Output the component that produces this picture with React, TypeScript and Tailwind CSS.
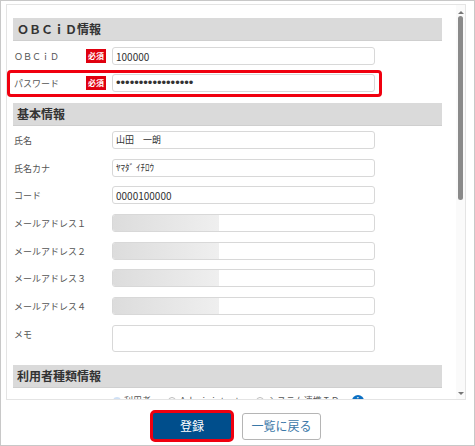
const Required = () => (
  <span className="flex h-[14px] w-[20px] shrink-0 items-center justify-center bg-[#e0000f] text-[8px] font-bold leading-none text-white">必須</span>
);

const Heading = ({ title, className }: { title: string; className: string }) => (
  <div className={`flex h-[23px] w-[429px] items-center border-b border-[#cfcfcf] bg-[#dadada] pl-[4px] text-[12px] font-bold text-[#333] ${className}`}>
    {title}
  </div>
);

type RowProps = {
  label: string;
  value?: string;
  required?: boolean;
  masked?: boolean;
  inputClass?: string;
  className: string;
};

const Row = ({ label, value, required, masked, inputClass = "text-[9px]", className }: RowProps) => (
  <div className={`flex h-[18px] items-center ${className}`}>
    <div className="w-[73px] shrink-0 whitespace-nowrap pl-[1px] pt-[2px] text-[9px] text-[#555]">{label}</div>
    <div className="w-[26px] shrink-0">{required && <Required />}</div>
    <div className={`flex h-[18px] w-[263px] items-center overflow-hidden rounded-[3px] border border-[#d8d8d8] bg-white pl-[3px] text-[#333] ${inputClass}`}>
      {masked && <div className="-ml-[4px] h-[18px] w-[107px] shrink-0 bg-gradient-to-r from-[#dcdcdc] to-[#efefef]" />}
      {value}
    </div>
  </div>
);

const App = () => {
  return (
    <div className="relative h-[446px] w-[475px] overflow-hidden border border-[#c8c8c8] bg-white font-['Noto_Sans_CJK_JP','Noto_Sans',sans-serif]">
      <div className="relative ml-[5px] mt-[3px] h-[396px] w-[460px] overflow-hidden border border-[#e4e4e4] bg-white pl-[6px] pt-[13px]">
        <Heading title="ＯＢＣｉＤ情報" className="" />
        <Row label="ＯＢＣｉＤ" value="100000" required inputClass="text-[10px]" className="mt-[6px]" />
        <Row label="パスワード" value="•••••••••••••••••" required inputClass="font-['Liberation_Sans'] text-[13px]" className="mt-[9px]" />
        <Heading title="基本情報" className="mt-[11px]" />
        <Row label="氏名" value="山田　一朗" className="mt-[5px]" />
        <Row label="氏名カナ" value="ﾔﾏﾀﾞ ｲﾁﾛｳ" className="mt-[10px]" />
        <Row label="コード" value="0000100000" inputClass="text-[10px]" className="mt-[9px]" />
        <Row label="メールアドレス１" masked className="mt-[10px]" />
        <Row label="メールアドレス２" masked className="mt-[10px]" />
        <Row label="メールアドレス３" masked className="mt-[9px]" />
        <Row label="メールアドレス４" masked className="mt-[10px]" />
        <div className="mt-[10px] flex h-[27px]">
          <div className="w-[99px] pl-[1px] pt-[1px] text-[9px] leading-[18px] text-[#555]">メモ</div>
          <div className="w-[263px] rounded-[3px] border border-[#d8d8d8]" />
        </div>
        <Heading title="利用者種類情報" className="mt-[13px]" />
        <div className="mt-[7px] flex items-center pl-[100px] text-[9px] leading-[12px] text-[#555]">
          <span className="mr-[3px] h-[8px] w-[8px] rounded-full border-[2px] border-[#cfe0f5] bg-[#2f80d8]" />
          <span>利用者</span>
          <span className="ml-[17px] mr-[4px] h-[8px] w-[8px] rounded-full border border-[#bbb]" />
          <span className="w-[76px] tracking-[1px]">Administrator</span>
          <span className="mr-[4px] h-[8px] w-[8px] rounded-full border border-[#bbb]" />
          <span className="whitespace-nowrap">システム連携ＩＤ</span>
          <span className="ml-[12px] flex h-[12px] w-[12px] items-center justify-center rounded-full bg-[#0b6fc2] text-[8px] font-bold text-white">i</span>
        </div>
        <div className="absolute bottom-0 right-0 top-0 flex w-[9px] flex-col items-center bg-[#fafafa] pt-[6px]">
          <div className="h-0 w-0 border-x-[3px] border-b-[3px] border-x-transparent border-b-[#777]" />
          <div className="mt-[2px] h-[184px] w-[5px] rounded-[3px] bg-[#8a8a8a]" />
          <div className="mb-[4px] mt-auto h-0 w-0 border-x-[3px] border-t-[3px] border-x-transparent border-t-[#777]" />
        </div>
      </div>

      <div className="mt-[10px] flex items-center pl-[149px]">
        <button className="flex h-[32px] w-[84px] items-center justify-center rounded-[5px] border-[3px] border-[#f0000f] bg-[#004e8c] text-[12px] text-white">登録</button>
        <button className="ml-[8px] flex h-[27px] w-[79px] items-center justify-center rounded-[3px] border border-[#b5b5b5] bg-white text-[12px] text-[#3a78a8]">一覧に戻る</button>
      </div>

      <div className="absolute left-[6px] top-[69px] h-[27px] w-[375px] rounded-[4px] border-[3px] border-[#f0000f]" />
    </div>
  );
};

export default App;
